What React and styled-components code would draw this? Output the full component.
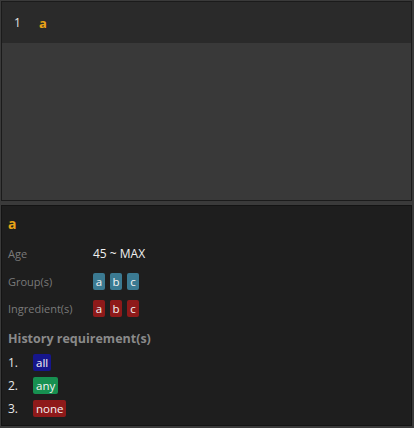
import React from 'react'
import styled, { createGlobalStyle } from 'styled-components'

const Global = createGlobalStyle`
  html, body {
    margin: 0;
    padding: 0;
    background: #3a3a3a;
    font-family: "Open Sans", "Noto Sans", sans-serif;
    font-size: 12px;
  }
`

const Page = styled.div`
  width: 414px;
  height: 428px;
  box-sizing: border-box;
  padding: 1px 2px 2px 1px;
  display: flex;
  flex-direction: column;
  gap: 4px;
`

const Editor = styled.div`
  height: 200px;
  flex-shrink: 0;
  box-sizing: border-box;
  border: 1px solid #1b1b1b;
  background: #393939;
  display: flex;
  flex-direction: column;
`

const EditorLine = styled.div`
  height: 41px;
  background: #2a2a2a;
  display: flex;
  align-items: center;
  padding-left: 12px;
  gap: 18px;
`

const LineNo = styled.span`
  color: #e6e6e6;
  font-size: 12px;
`

const Name = styled.span`
  color: #e8a317;
  font-weight: bold;
  font-size: ${p => p.size || 13}px;
`

const Details = styled.div`
  flex: 1;
  box-sizing: border-box;
  border: 1px solid #141414;
  background: #1e1e1e;
  padding: 5px 6px;
  display: flex;
  flex-direction: column;
`

const Title = styled.div`
  height: 24px;
  display: flex;
  align-items: center;
  margin-bottom: 5px;
`

const Row = styled.div`
  display: grid;
  grid-template-columns: 85px 1fr;
  align-items: center;
  height: 27.5px;
`

const Label = styled.span`
  color: #7a7a7a;
  font-size: 11px;
`

const Value = styled.span`
  color: #f0f0f0;
  font-size: 12px;
`

const Tags = styled.div`
  display: flex;
  gap: 5px;
`

const Tag = styled.span`
  background: ${p => p.bg};
  color: #f4f4f4;
  font-size: 11.5px;
  line-height: 17px;
  height: 17px;
  min-width: 12px;
  padding: 0 ${p => p.pad ?? 0}px;
  text-align: center;
  border-radius: 2px;
`

const Heading = styled.div`
  color: #8a8a8a;
  font-weight: bold;
  font-size: 12.5px;
  margin-top: 4px;
  height: 24px;
  display: flex;
  align-items: center;
`

const Item = styled.div`
  display: grid;
  grid-template-columns: 25px auto;
  justify-content: start;
  align-items: center;
  height: 23px;
`

const Num = styled.span`
  color: #e8e8e8;
  font-size: 12px;
`

const teal = '#3b7a92'
const red = '#8e1a1a'

export default function App() {
  return (
    <>
      <Global />
      <Page>
        <Editor>
          <EditorLine>
            <LineNo>1</LineNo>
            <Name>a</Name>
          </EditorLine>
        </Editor>
        <Details>
          <Title><Name size={14}>a</Name></Title>
          <Row>
            <Label>Age</Label>
            <Value>45 ~ MAX</Value>
          </Row>
          <Row>
            <Label>Group(s)</Label>
            <Tags>
              {['a', 'b', 'c'].map(t => <Tag key={t} bg={teal}>{t}</Tag>)}
            </Tags>
          </Row>
          <Row>
            <Label>Ingredient(s)</Label>
            <Tags>
              {['a', 'b', 'c'].map(t => <Tag key={t} bg={red}>{t}</Tag>)}
            </Tags>
          </Row>
          <Heading>History requirement(s)</Heading>
          <Item><Num>1.</Num><Tag bg="#16168c" pad={3}>all</Tag></Item>
          <Item><Num>2.</Num><Tag bg="#179050" pad={3}>any</Tag></Item>
          <Item><Num>3.</Num><Tag bg={red} pad={3}>none</Tag></Item>
        </Details>
      </Page>
    </>
  )
}
